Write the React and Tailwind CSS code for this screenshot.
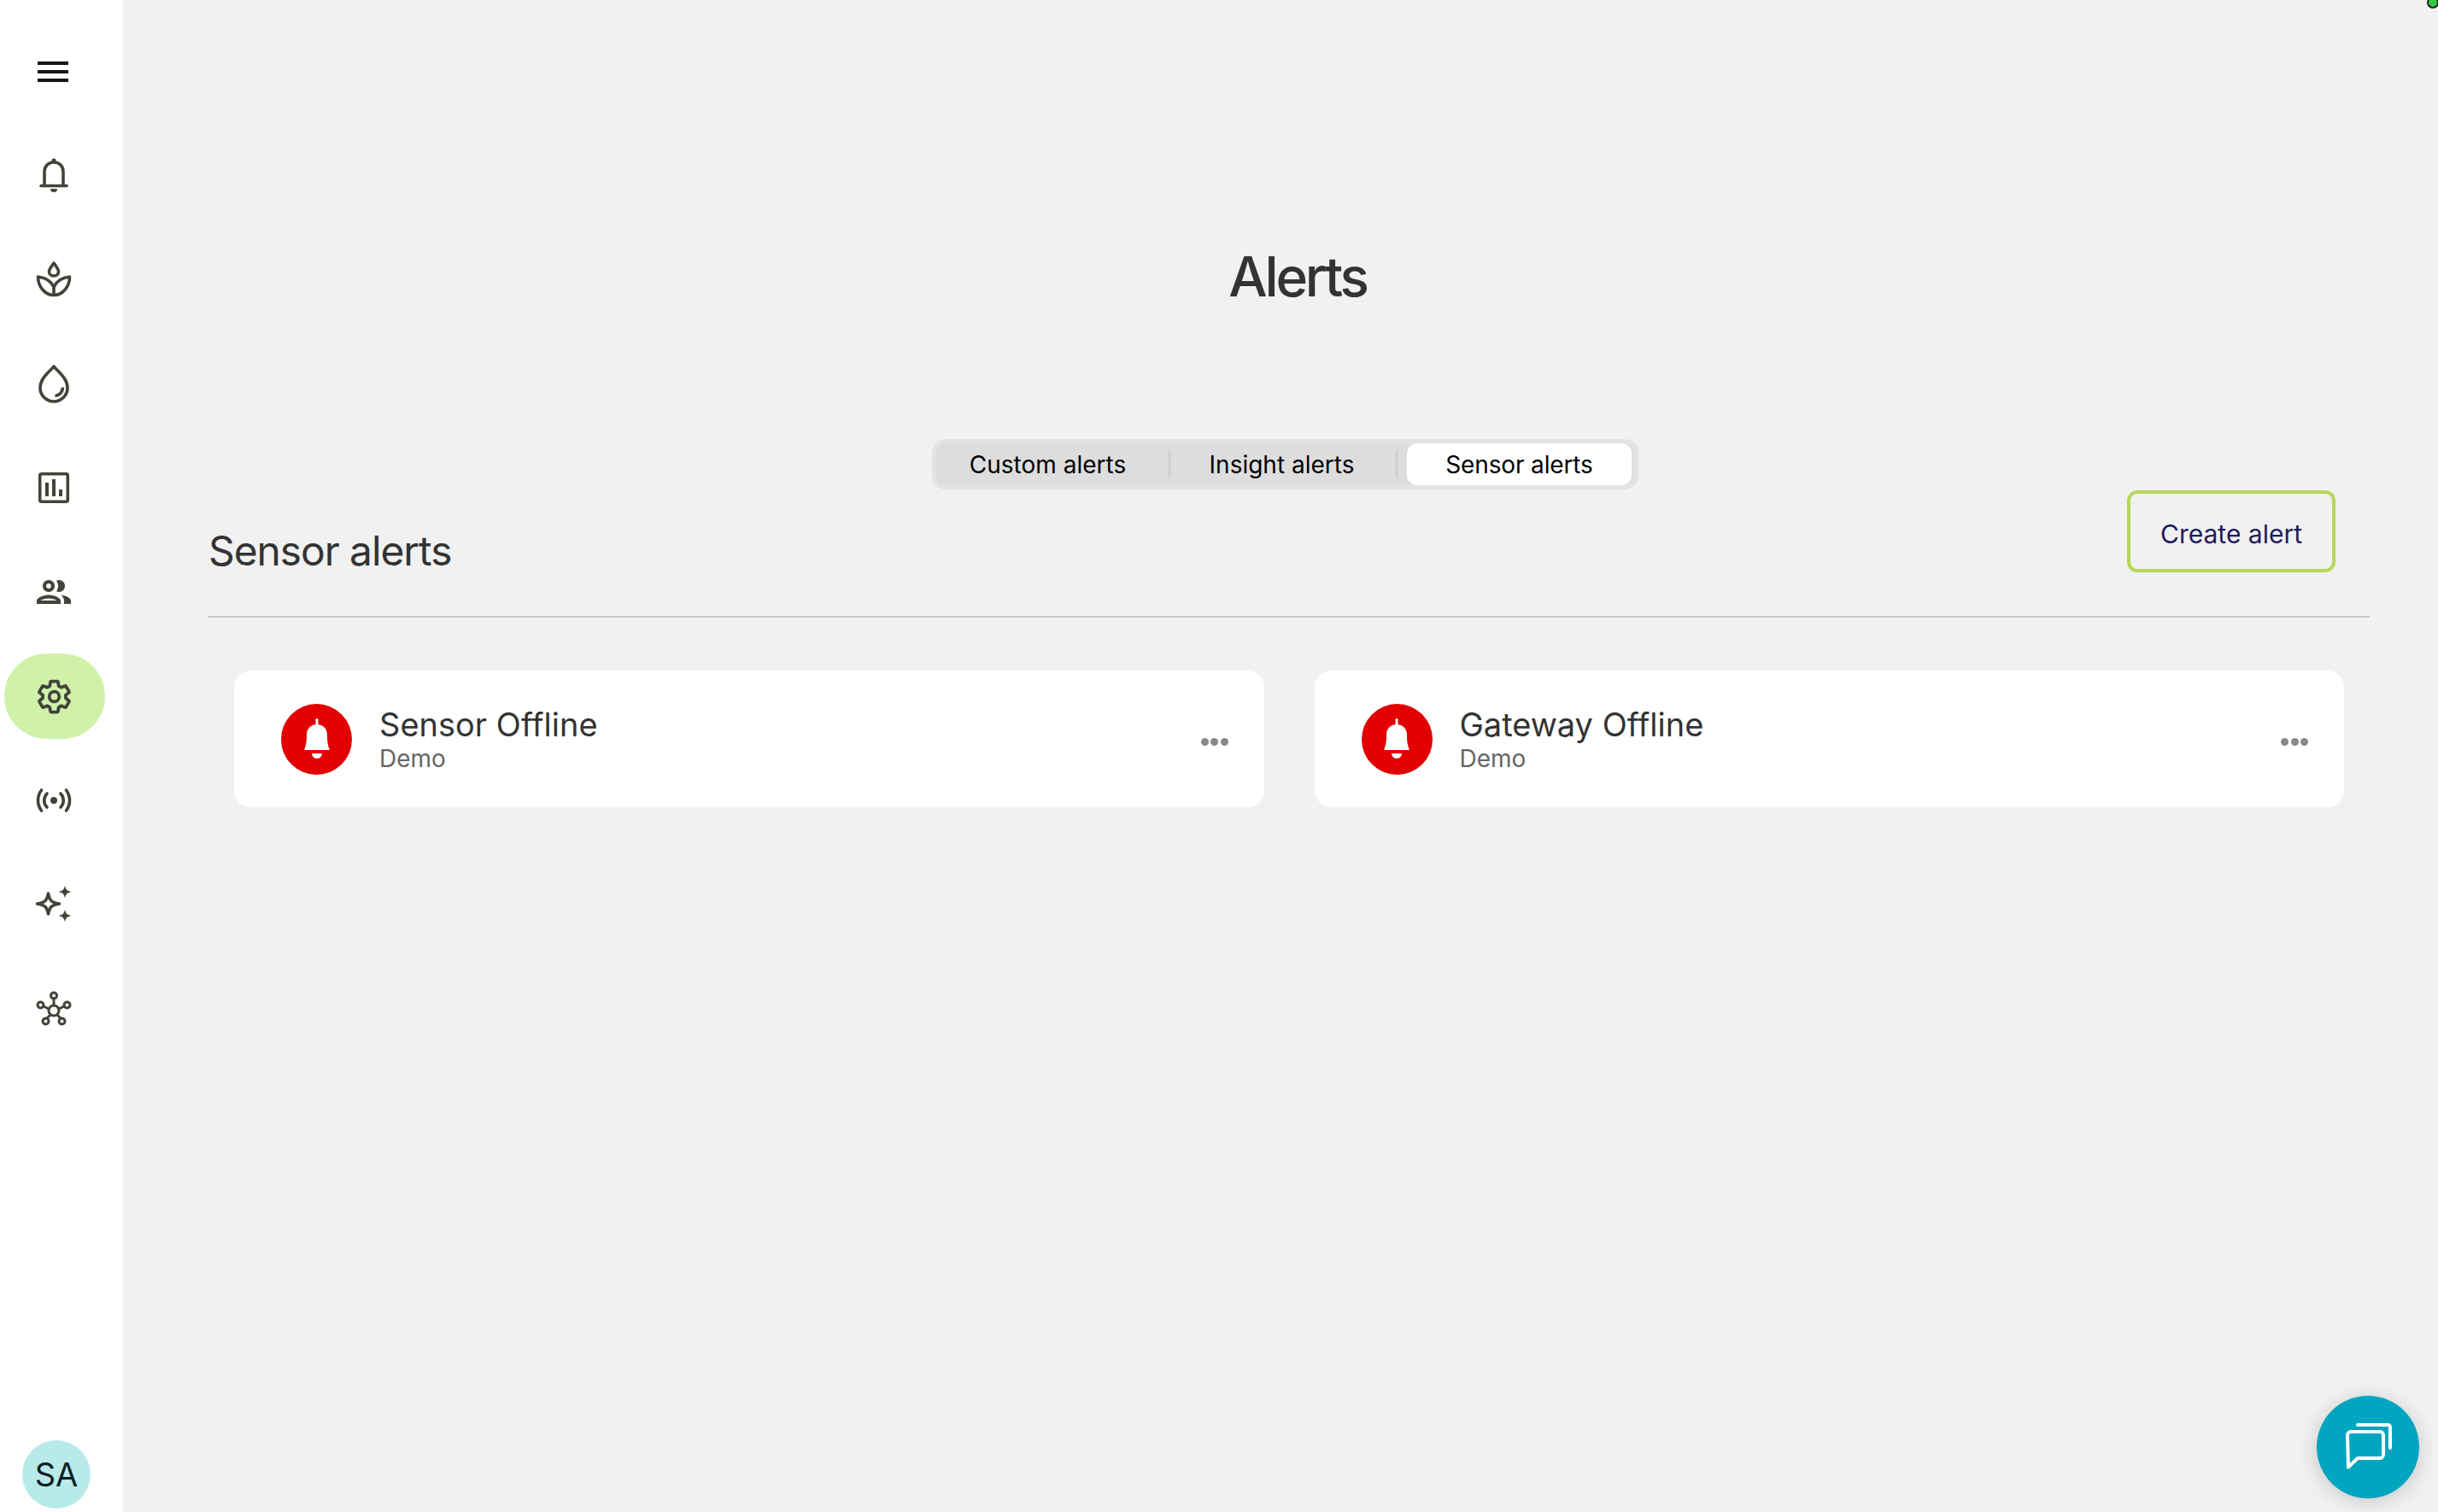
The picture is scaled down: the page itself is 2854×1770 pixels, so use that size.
const ICON = '#41443a';

function Icon({ children, size = 60, box = '-30 -30 60 60' }) {
  return (
    <svg width={size} height={size} viewBox={box} fill="none" stroke={ICON} strokeWidth="3.6" strokeLinecap="round" strokeLinejoin="round">
      {children}
    </svg>
  );
}

function BellIcon() {
  return (
    <Icon>
      <path d="M-11 12V-4C-11 -11 -6 -15 0 -15C6 -15 11 -11 11 -4V12" />
      <path d="M-15 12.5H15" />
      <circle cx="0" cy="-17" r="2.6" fill={ICON} stroke="none" />
      <path d="M-4 16H4A4 4 0 0 1 -4 16Z" fill={ICON} stroke="none" />
    </Icon>
  );
}

function SproutIcon() {
  return (
    <Icon>
      <path d="M0 -19C-3 -15 -5.500 -12 -5.500 -9C-5.500 -6 -3 -4 0 -4C3 -4 5.500 -6 5.500 -9C5.500 -12 3 -15 0 -19Z" />
      <path d="M-18.500 -3C-18.500 9 -10 18.500 0 18.500C10 18.500 18.500 9 18.500 -3C10 -2 3 2 0 9C-3 2 -10 -2 -18.500 -3Z" />
      <path d="M0 9V18" />
    </Icon>
  );
}

function DropIcon() {
  return (
    <Icon>
      <path d="M0 -20C-6 -13 -16 -6 -16 5A16 16 0 0 0 16 5C16 -6 6 -13 0 -20Z" />
      <path d="M1.500 14.500A10 10 0 0 0 10.500 4.500" strokeLinecap="butt" />
    </Icon>
  );
}

function ChartIcon() {
  return (
    <Icon>
      <rect x="-16.300" y="-16.300" width="32.600" height="32.600" rx="2" />
      <rect x="-10" y="-6" width="4" height="16" fill={ICON} stroke="none" />
      <rect x="-2" y="-10" width="4" height="20" fill={ICON} stroke="none" />
      <rect x="6" y="2" width="4" height="8" fill={ICON} stroke="none" />
    </Icon>
  );
}

function UsersIcon() {
  return (
    <svg width="48" height="48" viewBox="0 0 24 24" fill={ICON}>
      <path d="M9 13.750c-2.340 0-7 1.170-7 3.500V19h14v-1.750c0-2.330-4.660-3.500-7-3.500zM4.340 17c.840-.580 2.870-1.250 4.660-1.250s3.820.670 4.660 1.250H4.340zM9 12c1.930 0 3.500-1.570 3.500-3.500S10.930 5 9 5 5.500 6.570 5.500 8.500 7.070 12 9 12zm0-5c.830 0 1.500.670 1.500 1.500S9.830 10 9 10s-1.500-.670-1.500-1.500S8.170 7 9 7zm7.040 6.810c1.160.840 1.960 1.960 1.960 3.440V19h4v-1.750c0-2.020-3.500-3.170-5.960-3.440zM15 12c1.930 0 3.500-1.570 3.500-3.500S16.930 5 15 5c-.540 0-1.040.130-1.500.350.630.890 1 1.980 1 3.150s-.370 2.260-1 3.150c.460.220.960.350 1.500.350z" />
    </svg>
  );
}

function GearIcon() {
  return (
    <svg width="45" height="45" viewBox="0 0 24 24" fill="none" stroke={ICON} strokeWidth="2" strokeLinejoin="round">
      <path d="M19.140 12.940c.040-.300.060-.610.060-.940 0-.320-.020-.640-.070-.940l2.030-1.580c.180-.140.230-.410.120-.610l-1.920-3.320c-.120-.220-.370-.290-.590-.220l-2.390.960c-.500-.380-1.030-.700-1.620-.940l-.360-2.540c-.040-.240-.240-.410-.480-.410h-3.840c-.240 0-.430.170-.470.410l-.360 2.540c-.590.240-1.130.570-1.620.940l-2.390-.960c-.220-.080-.470 0-.590.220L2.740 8.870c-.120.210-.080.470.120.610l2.030 1.580c-.050.300-.090.630-.090.940s.020.640.070.940l-2.030 1.580c-.180.140-.230.410-.12.610l1.920 3.320c.120.220.37.290.59.220l2.390-.960c.500.380 1.030.700 1.620.940l.360 2.540c.050.240.240.410.480.410h3.840c.240 0 .440-.170.470-.410l.360-2.540c.590-.240 1.130-.560 1.620-.940l2.390.960c.220.080.470 0 .590-.220l1.920-3.320c.120-.220.070-.470-.12-.61l-2.010-1.580z" />
      <circle cx="12" cy="12" r="3.100" />
    </svg>
  );
}

function SignalIcon() {
  return (
    <Icon>
      <circle cx="0" cy="0" r="4" fill={ICON} stroke="none" />
      <path d="M-8 -8A11.500 11.500 0 0 0 -8 8" />
      <path d="M8 -8A11.500 11.500 0 0 1 8 8" />
      <path d="M-14.500 -12A20 20 0 0 0 -14.500 12" />
      <path d="M14.500 -12A20 20 0 0 1 14.500 12" />
    </Icon>
  );
}

function SparkleIcon() {
  return (
    <Icon>
      <path d="M-6.500 -13C-5 -5 -3 -2.500 6.500 -1C-3 .5 -5 3 -6.500 11C-8 3 -10 .5 -19.500 -1C-10 -2.500 -8 -5 -6.500 -13Z" />
      <path d="M13 -22.500C14 -17.500 15.500 -16 20.500 -15C15.500 -14 14 -12.500 13 -7.500C12 -12.500 10.500 -14 5.500 -15C10.500 -16 12 -17.500 13 -22.500Z" fill={ICON} stroke="none" />
      <path d="M13 5.500C14 10.500 15.500 12 20.500 13C15.500 14 14 15.500 13 20.500C12 15.500 10.500 14 5.500 13C10.500 12 12 10.500 13 5.500Z" fill={ICON} stroke="none" />
    </Icon>
  );
}

function HubIcon() {
  return (
    <Icon>
      <g strokeWidth="3">
        <circle cx="0" cy="2" r="6" />
        <circle cx="0" cy="-15.500" r="3.500" />
        <circle cx="-15.500" cy="-4.500" r="3.500" />
        <circle cx="15.500" cy="-4.500" r="3.500" />
        <circle cx="-9.500" cy="14.500" r="3.500" />
        <circle cx="9.500" cy="14.500" r="3.500" />
        <path d="M0 -12V-4M-12 -3L-6 0M12 -3L6 0M-8 11L-4 7M8 11L4 7" />
      </g>
    </Icon>
  );
}

const navItems = [
  { icon: <BellIcon />, label: 'Alerts' },
  { icon: <SproutIcon />, label: 'Crops' },
  { icon: <DropIcon />, label: 'Irrigation' },
  { icon: <ChartIcon />, label: 'Reports' },
  { icon: <UsersIcon />, label: 'Users' },
  { icon: <GearIcon />, label: 'Settings', active: true },
  { icon: <SignalIcon />, label: 'Sensors' },
  { icon: <SparkleIcon />, label: 'Insights' },
  { icon: <HubIcon />, label: 'Network' },
];

function AlertCard({ title, farm }) {
  return (
    <div className="flex h-[160px] items-center rounded-[20px] bg-white pl-[55px] pr-[42px]">
      <div className="flex h-[83px] w-[83px] shrink-0 items-center justify-center rounded-full bg-[#e30000]">
        <svg width="40" height="52" viewBox="-20 -26 40 52" fill="#ffffff">
          <rect x="-1.500" y="-24" width="3" height="8" rx="1.500" />
          <path d="M-15 13C-12 6 -12 0 -12 -5C-12 -13 -6 -17 0 -17C6 -17 12 -13 12 -5C12 0 12 6 15 13Z" />
          <path d="M-6 17H6A6 6 0 0 1 -6 17Z" />
        </svg>
      </div>
      <div className="ml-[32px] flex flex-col">
        <span className="text-[38px] leading-[44px] text-[#333333]">{title}</span>
        <span className="mt-[2px] text-[28px] leading-[32px] text-[#666666]">{farm}</span>
      </div>
      <button className="ml-auto mt-[6px] flex items-center gap-[2.5px]">
        <span className="h-[9px] w-[9px] rounded-full bg-[#888888]" />
        <span className="h-[9px] w-[9px] rounded-full bg-[#888888]" />
        <span className="h-[9px] w-[9px] rounded-full bg-[#888888]" />
      </button>
    </div>
  );
}

export default function App() {
  return (
    <div className="relative flex h-[1770px] w-[2854px] overflow-hidden bg-[#f1f1f1] font-['Inter',sans-serif]">
      {/* Sidebar */}
      <aside className="flex w-[144px] shrink-0 flex-col bg-white pl-[5px]">
        <button className="mt-[54px] flex h-[60px] w-[118px] items-center justify-center pr-[4px]">
          <span className="flex w-[36px] flex-col gap-[6px]">
            <span className="h-[4px] bg-[#171717]" />
            <span className="h-[4px] bg-[#171717]" />
            <span className="h-[4px] bg-[#171717]" />
          </span>
        </button>
        <nav className="mt-[30px] flex flex-col">
          {navItems.map((item) => (
            <a
              key={item.label}
              className={
                item.active
                  ? 'my-[11px] flex h-[100px] w-[118px] items-center justify-center rounded-[50px] bg-[#cff2a8] pr-[2px]'
                  : 'my-[11px] flex h-[100px] w-[118px] items-center justify-center pr-[2px]'
              }
            >
              {item.icon}
            </a>
          ))}
        </nav>
        <div className="mt-auto mb-[4px] ml-[21px] flex h-[80px] w-[80px] items-center justify-center rounded-full bg-[#b9eaea] text-[38px] text-[#0c1f24]">
          SA
        </div>
      </aside>

      {/* Main */}
      <main className="flex min-w-0 flex-1 flex-col pl-[100px] pr-[80px]">
        <h1 className="ml-[20px] mt-[284px] text-center text-[64px] leading-[80px] font-medium tracking-[-0.05em] text-[#333333]">Alerts</h1>

        <div className="mt-[150px] flex justify-center pr-[9px]">
          <div className="flex h-[59px] w-[827px] items-center rounded-[16px] border-[5px] border-[#e3e3e3] bg-[#dddddd] text-[28px] text-black">
            <span className="flex w-[272px] justify-center pr-[11px]">Custom alerts</span>
            <span className="h-[33px] w-[2px] bg-[#cccccc]" />
            <span className="flex w-[264px] justify-center pr-[3px]">Insight alerts</span>
            <span className="h-[33px] w-[2px] bg-[#cccccc]" />
            <span className="ml-[11px] flex h-[49px] w-[263px] items-center justify-center rounded-[12px] bg-white tracking-[-0.005em]">Sensor alerts</span>
          </div>
        </div>

        <div className="flex h-[150px] items-start justify-between border-b-2 border-[#c8c8c8]">
          <h2 className="mt-[43px] text-[48px] leading-[58px] font-normal tracking-[-0.023em] text-[#333333]">Sensor alerts</h2>
          <button className="mr-[40px] mt-px flex h-[96px] w-[244px] items-center justify-center rounded-[12px] border-4 border-[#b9d65c] pt-[7px] text-[30px] text-[#201a5a]">
            Create alert
          </button>
        </div>

        <div className="mt-[62px] grid grid-cols-2 gap-[59px] px-[30px]">
          <AlertCard title="Sensor Offline" farm="Demo" />
          <AlertCard title="Gateway Offline" farm="Demo" />
        </div>
      </main>

      {/* status dot */}
      <span className="absolute -top-[4px] -right-[1px] h-[14px] w-[14px] rounded-full border-2 border-[#222222] bg-[#2ecc40]" />

      {/* chat button */}
      <button className="absolute right-[22px] bottom-[16px] flex h-[120px] w-[120px] items-center justify-center rounded-full bg-[#00a5c0] shadow-[0_4px_24px_rgba(0,0,0,0.18)]">
        <svg width="60" height="60" viewBox="0 0 60 60" fill="none" stroke="#ffffff" strokeWidth="4" strokeLinecap="round" strokeLinejoin="round">
          <path d="M18 4H53C55 4 56 5 56 7V31" />
          <path d="M6 16C6 14 8 12 10 12H44C46 12 48 14 48 16V39C48 41 46 43 44 43H18L7 53.500Z" />
        </svg>
      </button>
    </div>
  );
}
